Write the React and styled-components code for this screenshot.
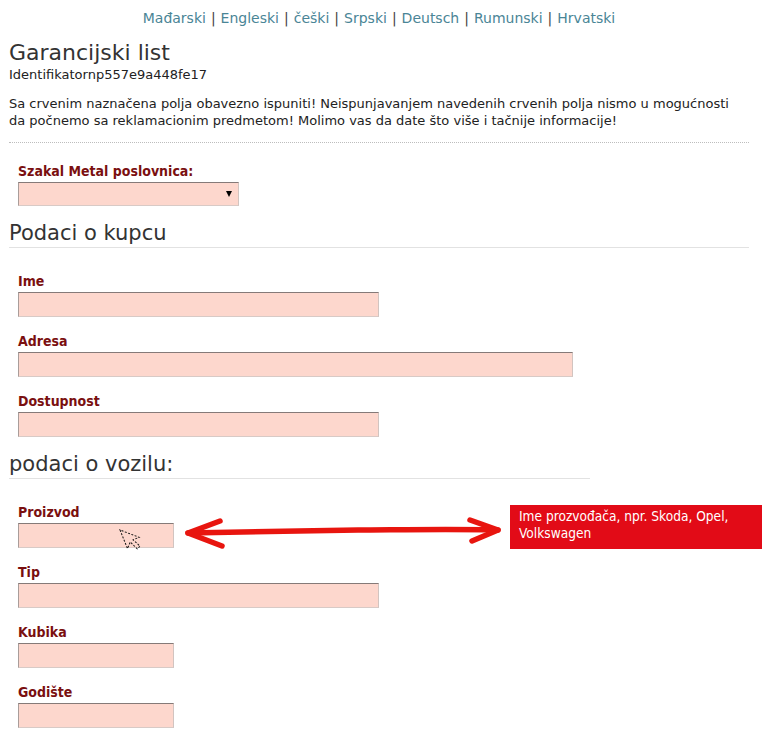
import React from "react";
import styled, { createGlobalStyle } from "styled-components";

const Global = createGlobalStyle`
  html, body { margin: 0; padding: 0; background: #fff; }
  body { font-family: "DejaVu Sans", Verdana, sans-serif; color: #222; }
`;

const Page = styled.div`
  width: 740px;
  padding: 0 9px;
  display: flex;
  flex-direction: column;
`;

const LangNav = styled.nav`
  display: flex;
  justify-content: center;
  gap: 5px;
  padding: 9px 0 0 0;
  font-size: 14px;
  line-height: 18px;
  color: #333;
`;

const LangLink = styled.a`
  color: #4a8596;
  text-decoration: none;
`;

const Sep = styled.span`
  color: #444;
`;

const Title = styled.h1`
  margin: 13px 0 0 0;
  font-size: 22px;
  line-height: 26px;
  font-weight: normal;
  color: #333;
`;

const Ident = styled.div`
  font-size: 13px;
  line-height: 16px;
  color: #222;
  margin-top: 1px;
`;

const Intro = styled.p`
  margin: 12px 0 0 0;
  font-size: 13px;
  line-height: 17px;
  color: #222;
`;

const Dotted = styled.hr`
  margin: 13px 0 0 0;
  border: 0;
  border-top: 1px dotted #bdbdbd;
  height: 0;
`;

const Section = styled.section`
  display: flex;
  flex-direction: column;
  gap: 16px;
  padding-left: 9px;
  margin-top: ${(p) => p.$top}px;
`;

const Heading = styled.h2`
  margin: ${(p) => p.$top}px 0 0 0;
  width: ${(p) => p.$w}px;
  font-size: 21px;
  line-height: 26px;
  font-weight: normal;
  color: #333;
  padding-bottom: 1px;
  border-bottom: 1px solid #e2e2e2;
`;

const Field = styled.div`
  position: relative;
  display: flex;
  flex-direction: column;
  gap: 3px;
`;

const Label = styled.label`
  font-family: "DejaVu Sans Condensed", Tahoma, sans-serif;
  font-weight: bold;
  font-size: 14px;
  line-height: 16px;
  color: #7a0f10;
`;

const Input = styled.div`
  box-sizing: border-box;
  width: ${(p) => p.$w}px;
  height: 25px;
  background: #fdd7cd;
  border-top: 1px solid #857a78;
  border-left: 1px solid #a99d9a;
  border-right: 1px solid #d2c4c0;
  border-bottom: 1px solid #d8cac6;
`;

const Select = styled(Input)`
  height: 24px;
  display: flex;
  align-items: center;
  justify-content: flex-end;
  padding-right: 6px;
`;

const Caret = styled.span`
  width: 0;
  height: 0;
  border-left: 3px solid transparent;
  border-right: 3px solid transparent;
  border-top: 6px solid #000;
`;

const Tooltip = styled.div`
  position: absolute;
  left: 492px;
  top: 1px;
  box-sizing: border-box;
  width: 252px;
  height: 44px;
  padding: 3px 9px;
  background: #e20b17;
  color: #fff;
  font-family: "DejaVu Sans Condensed", Tahoma, sans-serif;
  font-size: 13.6px;
  line-height: 17px;
`;

const ArrowSvg = styled.svg`
  position: absolute;
  left: 160px;
  top: 8px;
`;

const CursorSvg = styled.svg`
  position: absolute;
  left: 100px;
  top: 24px;
`;

const langs = ["Mađarski", "Engleski", "češki", "Srpski", "Deutsch", "Rumunski", "Hrvatski"];

function TextField({ label, w, children }) {
  return (
    <Field>
      <Label>{label}</Label>
      <Input $w={w} />
      {children}
    </Field>
  );
}

export default function App() {
  return (
    <>
      <Global />
      <Page>
        <LangNav>
          {langs.map((l, i) => (
            <React.Fragment key={l}>
              {i > 0 && <Sep>|</Sep>}
              <LangLink href="#">{l}</LangLink>
            </React.Fragment>
          ))}
        </LangNav>
        <Title>Garancijski list</Title>
        <Ident>Identifikatornp557e9a448fe17</Ident>
        <Intro>
          Sa crvenim naznačena polja obavezno ispuniti! Neispunjavanjem navedenih crvenih polja nismo u mogućnosti
          <br />
          da počnemo sa reklamacionim predmetom! Molimo vas da date što više i tačnije informacije!
        </Intro>
        <Dotted />
        <Section $top={20}>
          <Field>
            <Label>Szakal Metal poslovnica:</Label>
            <Select $w={221}>
              <Caret />
            </Select>
          </Field>
        </Section>
        <Heading $top={14} $w={740}>Podaci o kupcu</Heading>
        <Section $top={25}>
          <TextField label="Ime" w={361} />
          <TextField label="Adresa" w={555} />
          <TextField label="Dostupnost" w={361} />
        </Section>
        <Heading $top={14} $w={581}>podaci o vozilu:</Heading>
        <Section $top={25}>
          <TextField label="Proizvod" w={156}>
            <CursorSvg width="26" height="32" viewBox="0 0 26 32">
              <path
                d="M2 2 L2 22 L7 17 L11 26 L14.5 24.5 L10.5 16 L17 16 Z"
                fill="none"
                stroke="#111"
                strokeWidth="1"
                strokeDasharray="2 1.5"
                transform="rotate(-22 2 2)"
              />
            </CursorSvg>
            <ArrowSvg width="340" height="44" viewBox="0 0 340 44">
              <g stroke="#e8150f" strokeWidth="5.5" strokeLinecap="round" strokeLinejoin="round" fill="none">
                <path d="M10 21 C 80 20, 150 18, 180 18 S 270 17, 320 18" />
                <path d="M42 9 L10 21 L44 34" />
                <path d="M292 8 L320 18 L294 29" />
              </g>
            </ArrowSvg>
            <Tooltip>
              Ime prozvođača, npr. Skoda, Opel,
              <br />
              Volkswagen
            </Tooltip>
          </TextField>
          <TextField label="Tip" w={361} />
          <TextField label="Kubika" w={156} />
          <TextField label="Godište" w={156} />
        </Section>
      </Page>
    </>
  );
}
